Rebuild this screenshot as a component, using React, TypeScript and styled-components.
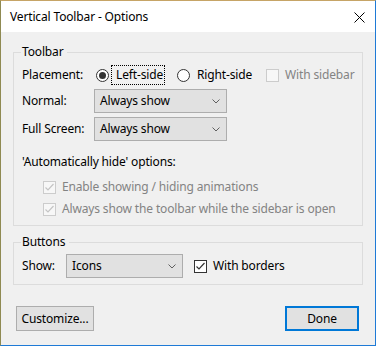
import styled, { createGlobalStyle } from "styled-components";

const GlobalStyle = createGlobalStyle`
  html, body {
    margin: 0;
    padding: 0;
    background: #f0f0f0;
  }
  * {
    box-sizing: border-box;
  }
`;

const Window = styled.div`
  width: 376px;
  height: 346px;
  display: flex;
  flex-direction: column;
  background: #f0f0f0;
  border-top: 1px solid #c6a466;
  border-left: 1px solid #8f8a52;
  border-right: 1px solid #1e7ad6;
  border-bottom: 1px solid #1e7ad6;
  font-family: "Segoe UI", "Noto Sans", sans-serif;
  font-size: 12px;
  line-height: 16px;
  letter-spacing: -0.15px;
  color: #000;
`;

const TitleBar = styled.div`
  height: 31px;
  flex: none;
  background: #fff;
  display: flex;
  align-items: center;
  justify-content: space-between;
  padding: 1px 10px 0 9px;
`;

const Title = styled.span`
  font-size: 12px;
`;

const Body = styled.div`
  flex: 1;
  display: flex;
  flex-direction: column;
  padding: 12px 12px 0;
`;

const GroupBox = styled.fieldset<{ $bottom: number; $top: number }>`
  margin: 0;
  min-width: 0;
  border: 1px solid #dcdcdc;
  padding: ${(p) => p.$top}px 8px ${(p) => p.$bottom}px 8px;
  & + & {
    margin-top: 8px;
  }
`;

const Legend = styled.legend`
  padding: 0 4px 0 1px;
  margin-left: -1px;
  line-height: 16px;
`;

const FormGrid = styled.div`
  display: grid;
  grid-template-columns: 72px auto;
  row-gap: 4px;
  align-items: center;
`;

const Label = styled.span<{ $width?: number }>`
  white-space: nowrap;
  ${(p) => (p.$width ? `width: ${p.$width}px; flex: none;` : "")}
`;

const RadioRow = styled.div`
  height: 20px;
  display: flex;
  align-items: center;
  padding-left: 2px;
`;

const RadioItem = styled.label`
  display: flex;
  align-items: center;
  margin-right: 12px;
`;

const RadioCircle = styled.span<{ $checked?: boolean }>`
  width: 13px;
  height: 13px;
  border-radius: 50%;
  border: 1px solid #333;
  background: #fff;
  display: flex;
  align-items: center;
  justify-content: center;
  flex: none;
  &::after {
    content: "";
    width: 7px;
    height: 7px;
    border-radius: 50%;
    background: #333;
    display: ${(p) => (p.$checked ? "block" : "none")};
  }
`;

const RadioText = styled.span<{ $focused?: boolean }>`
  margin-left: 2px;
  padding: 1px 1px 1px 4px;
  border: 1px dotted ${(p) => (p.$focused ? "#000" : "transparent")};
  white-space: nowrap;
`;

const CheckItem = styled.label<{ $disabled?: boolean }>`
  display: flex;
  align-items: center;
  gap: 6px;
  white-space: nowrap;
  color: ${(p) => (p.$disabled ? "#838383" : "#000")};
`;

const CheckBoxBox = styled.span<{ $disabled?: boolean }>`
  width: 13px;
  height: 13px;
  flex: none;
  border: 1px solid ${(p) => (p.$disabled ? "#cccccc" : "#333")};
  background: ${(p) => (p.$disabled ? "#f7f7f7" : "#fff")};
  display: flex;
  align-items: center;
  justify-content: center;
`;

const Combo = styled.div<{ $width: number }>`
  width: ${(p) => p.$width}px;
  height: 24px;
  border: 1px solid #adadad;
  background: #e1e1e1;
  display: flex;
  align-items: center;
  justify-content: space-between;
  padding: 0 6px 0 5px;
`;

const Note = styled.div`
  margin-top: 13px;
`;

const CheckList = styled.div`
  display: flex;
  flex-direction: column;
  gap: 6px;
  padding-left: 21px;
  margin-top: 9px;
`;

const ShowRow = styled.div`
  display: flex;
  align-items: center;
  gap: 11px;
`;

const ShowField = styled.div`
  display: flex;
  align-items: center;
`;

const Footer = styled.div`
  display: flex;
  justify-content: space-between;
  padding: 21px 4px 0 3px;
`;

const Button = styled.button<{ $primary?: boolean; $width: number }>`
  width: ${(p) => p.$width}px;
  height: 25px;
  font-family: inherit;
  font-size: 12px;
  letter-spacing: inherit;
  color: #000;
  background: #e1e1e1;
  border: ${(p) => (p.$primary ? "2px solid #0078d7" : "1px solid #adadad")};
  padding: 0;
  cursor: default;
`;

const Chevron = () => (
  <svg width="8" height="5" viewBox="0 0 8 5">
    <polyline points="0.5,0.5 4,4 7.5,0.5" fill="none" stroke="#606060" strokeWidth="1" />
  </svg>
);

const CheckMark = ({ color }: { color: string }) => (
  <svg width="11" height="11" viewBox="0 0 11 11">
    <polyline points="1.5,5.5 4,8 9.5,2" fill="none" stroke={color} strokeWidth="1.2" />
  </svg>
);

const CloseIcon = () => (
  <svg width="11" height="11" viewBox="0 0 11 11">
    <path d="M0.5 0.5 L10.5 10.5 M10.5 0.5 L0.5 10.5" stroke="#000" strokeWidth="1" />
  </svg>
);

type CheckProps = {
  label: string;
  checked?: boolean;
  disabled?: boolean;
};

const Check = ({ label, checked, disabled }: CheckProps) => (
  <CheckItem $disabled={disabled}>
    <CheckBoxBox $disabled={disabled}>
      {checked && <CheckMark color={disabled ? "#c4c4c4" : "#333"} />}
    </CheckBoxBox>
    {label}
  </CheckItem>
);

const ComboBox = ({ value, width }: { value: string; width: number }) => (
  <Combo $width={width}>
    <span>{value}</span>
    <Chevron />
  </Combo>
);

const App = () => {
  return (
    <>
      <GlobalStyle />
      <Window>
        <TitleBar>
          <Title>Vertical Toolbar - Options</Title>
          <CloseIcon />
        </TitleBar>
        <Body>
          <GroupBox $top={5} $bottom={8}>
            <Legend>Toolbar</Legend>
            <FormGrid>
              <Label>Placement:</Label>
              <RadioRow>
                <RadioItem>
                  <RadioCircle $checked />
                  <RadioText $focused>Left-side</RadioText>
                </RadioItem>
                <RadioItem>
                  <RadioCircle />
                  <RadioText>Right-side</RadioText>
                </RadioItem>
                <Check label="With sidebar" disabled />
              </RadioRow>
              <Label>Normal:</Label>
              <ComboBox value="Always show" width={133} />
              <Label>Full Screen:</Label>
              <ComboBox value="Always show" width={133} />
            </FormGrid>
            <Note>'Automatically hide' options:</Note>
            <CheckList>
              <Check label="Enable showing / hiding animations" checked disabled />
              <Check label="Always show the toolbar while the sidebar is open" checked disabled />
            </CheckList>
          </GroupBox>
          <GroupBox $top={4} $bottom={6}>
            <Legend>Buttons</Legend>
            <ShowRow>
              <ShowField>
                <Label $width={44}>Show:</Label>
                <ComboBox value="Icons" width={117} />
              </ShowField>
              <Check label="With borders" checked />
            </ShowRow>
          </GroupBox>
          <Footer>
            <Button $width={78}>Customize...</Button>
            <Button $width={74} $primary>
              Done
            </Button>
          </Footer>
        </Body>
      </Window>
    </>
  );
};

export default App;
